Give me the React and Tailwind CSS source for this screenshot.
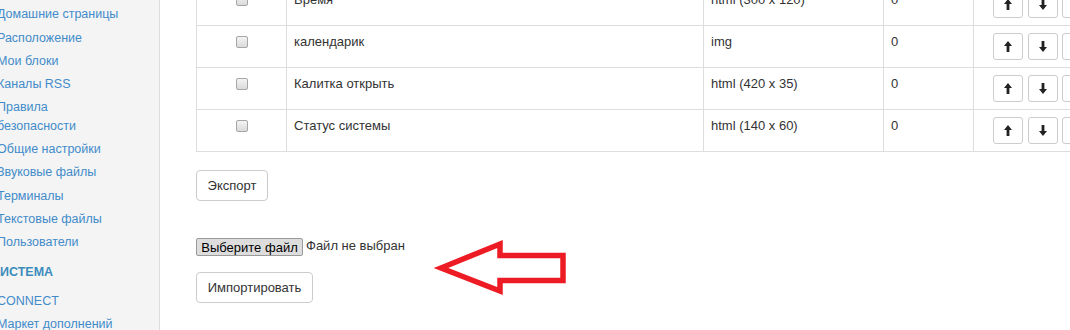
import React from 'react';

const menu = [
  'Домашние страницы',
  'Расположение',
  'Мои блоки',
  'Каналы RSS',
  'Правила безопасности',
  'Общие настройки',
  'Звуковые файлы',
  'Терминалы',
  'Текстовые файлы',
  'Пользователи',
];

const rows = [
  { title: 'Время', type: 'html (300 x 120)', priority: '0' },
  { title: 'календарик', type: 'img', priority: '0' },
  { title: 'Калитка открыть', type: 'html (420 x 35)', priority: '0' },
  { title: 'Статус системы', type: 'html (140 x 60)', priority: '0' },
];

const ArrowIcon = ({ down }) => (
  <svg width="8" height="11" viewBox="0 0 8 11" className={down ? 'rotate-180' : ''}>
    <path d="M4 0 L8 5 L5.4 5 L5.4 11 L2.6 11 L2.6 5 L0 5 Z" fill="#222" />
  </svg>
);

const Sidebar = () => (
  <div className="w-[160px] shrink-0 bg-[#f4f4f4] border-r border-[#dddddd] pt-[3px] text-[12.5px] leading-[18.57px] text-[#428bca] overflow-hidden">
    {menu.map((item) => (
      <div key={item} className="-ml-[3px] w-[126px] py-[2.35px]">
        {item}
      </div>
    ))}
    <div className="-ml-[9px] pt-[9px] pb-[8px] font-bold text-[#3c8dbc]">СИСТЕМА</div>
    <div className="-ml-[3px] w-[126px] py-[2.35px]">CONNECT</div>
    <div className="-ml-[3px] w-[126px] py-[2.35px]">Маркет дополнений</div>
  </div>
);

const Table = () => (
  <div className="-mt-[17px] w-[1000px] border-t border-l border-[#dddddd] text-[13px] leading-[18px] text-[#333]">
    {rows.map((row) => (
      <div key={row.title} className="flex h-[42px] border-b border-[#dddddd]">
        <div className="w-[90px] border-r border-[#dddddd] flex justify-center pt-[10px]">
          <span className="w-[12px] h-[12px] rounded-[2px] border border-[#a6a6a6] bg-gradient-to-b from-[#f4f4f4] to-[#dadada]" />
        </div>
        <div className="w-[417px] border-r border-[#dddddd] px-[7px] pt-[7px]">{row.title}</div>
        <div className="w-[180px] border-r border-[#dddddd] px-[7px] pt-[7px]">{row.type}</div>
        <div className="w-[90px] border-r border-[#dddddd] px-[7px] pt-[7px]">{row.priority}</div>
        <div className="flex-1 flex gap-[4.5px] pl-[19px] pt-[7px]">
          <button className="w-[30px] h-[27px] flex items-center justify-center border border-[#cccccc] rounded-[3px] bg-white">
            <ArrowIcon />
          </button>
          <button className="w-[30px] h-[27px] flex items-center justify-center border border-[#cccccc] rounded-[3px] bg-white">
            <ArrowIcon down />
          </button>
          <button className="w-[30px] h-[27px] flex items-center justify-center border border-[#cccccc] rounded-[3px] bg-white" />
        </div>
      </div>
    ))}
  </div>
);

export default function App() {
  return (
    <div className="relative w-[1070px] h-[330px] overflow-hidden flex bg-white font-['Liberation_Sans',Arial,sans-serif]">
      <Sidebar />
      <div className="flex-1 pl-[36px] overflow-hidden">
        <Table />

        <button className="mt-[18px] w-[72px] h-[31px] border border-[#cccccc] rounded-[4px] bg-white text-[13px] text-[#333]">
          Экспорт
        </button>

        <div className="mt-[37px] flex items-center gap-[3px] text-[13px]">
          <button className="w-[107px] h-[18px] flex items-center justify-center border border-[#9a9a9a] rounded-[2px] bg-[#dddddd] text-black leading-none">
            Выберите файл
          </button>
          <span className="text-[#333] -mt-[2px]">Файл не выбран</span>
        </div>

        <button className="mt-[16px] w-[117px] h-[31px] border border-[#cccccc] rounded-[4px] bg-white text-[13px] text-[#333]">
          Импортировать
        </button>
      </div>

      <svg className="absolute left-0 top-0 pointer-events-none" width="1070" height="330">
        <polygon
          points="441,268 500,244 500,255.5 563,255.5 563,280.5 500,280.5 500,291"
          fill="none"
          stroke="#ed1c24"
          strokeWidth="5.5"
        />
      </svg>
    </div>
  );
}
